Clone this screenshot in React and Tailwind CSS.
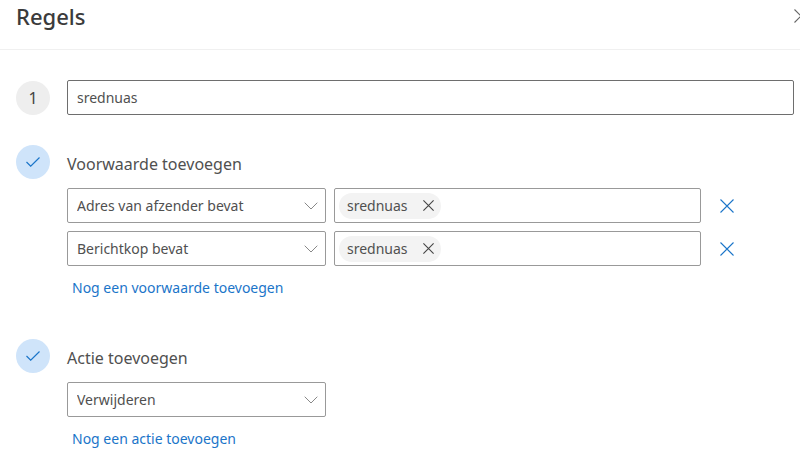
const conditions = [
  { id: "sender", type: "Adres van afzender bevat", value: "srednuas" },
  { id: "header", type: "Berichtkop bevat", value: "srednuas" },
];

function CrossIcon({ className }) {
  return (
    <svg viewBox="0 0 14 14" className={className} fill="none" stroke="currentColor" strokeWidth="1.1" aria-hidden="true">
      <path d="M.5.5l13 13M13.5.5l-13 13" vectorEffect="non-scaling-stroke" />
    </svg>
  );
}

function StepBadge({ children, done }) {
  return (
    <div
      className={`flex size-[34px] shrink-0 items-center justify-center rounded-full ${
        done ? "bg-[#cfe4fa] text-[#1b75c9]" : "bg-[#eeeeee] text-[#444444]"
      }`}
    >
      {done ? (
        <svg viewBox="0 0 14 10" className="h-[10px] w-[14px]" fill="none" stroke="currentColor" strokeWidth="1.2" aria-hidden="true">
          <path d="M.5 5l4.2 4.2L13.5.5" />
        </svg>
      ) : (
        <span className="text-base leading-6">{children}</span>
      )}
    </div>
  );
}

function Dropdown({ label, value }) {
  return (
    <div className="grid w-[259px] shrink-0 items-center">
      <select
        aria-label={label}
        defaultValue={value}
        className="col-start-1 row-start-1 h-[35px] w-full appearance-none rounded-[2px] border border-[#999999] bg-white pr-8 pl-[9px] text-sm text-[#505050]"
      >
        <option>{value}</option>
      </select>
      <svg
        viewBox="0 0 14 8"
        className="pointer-events-none col-start-1 row-start-1 mr-2 h-2 w-[14px] justify-self-end text-[#888888]"
        fill="none"
        stroke="currentColor"
        aria-hidden="true"
      >
        <path d="M.7.7L7 7 13.3.7" />
      </svg>
    </div>
  );
}

function TagField({ label, value }) {
  return (
    <div className="flex h-[35px] min-w-0 flex-1 items-center gap-2 rounded-[2px] border border-[#999999] bg-white px-1">
      <span className="flex h-[26px] shrink-0 items-center gap-[15px] rounded-full bg-[#f3f3f3] pr-[7px] pl-2 text-sm text-[#505050]">
        {value}
        <button type="button" aria-label={`${value} verwijderen`} className="text-[#444444]">
          <CrossIcon className="size-[11px]" />
        </button>
      </span>
      <input aria-label={label} className="min-w-0 flex-1 outline-none" />
    </div>
  );
}

function AddLink({ children }) {
  return (
    <button type="button" className="mt-[10px] block px-[5px] text-sm leading-6 text-[#1b75c9]">
      {children}
    </button>
  );
}

function Step({ title, className = "", children }) {
  return (
    <section className={`flex gap-[17px] ${className}`}>
      <StepBadge done />
      <div className="min-w-0 flex-1">
        <h2 className="pt-[7px] pb-3 text-base leading-6 text-[#505050]">{title}</h2>
        {children}
      </div>
    </section>
  );
}

export default function App() {
  return (
    <div className="bg-white font-['Noto_Sans',sans-serif] text-[#505050]">
      <header className="flex items-center justify-between overflow-hidden border-b border-[#f0f0f0] pt-0.5 pb-[19px] pl-4">
        <h1 className="text-[22px] leading-7 font-medium text-[#3b3b3b]">Regels</h1>
        <button type="button" aria-label="Sluiten" className="-mr-2 text-[#666666]">
          <CrossIcon className="size-[14px]" />
        </button>
      </header>

      <main className="pt-[30px] pr-[6px] pb-[11px] pl-4">
        <section className="flex items-center gap-[17px]">
          <StepBadge>1</StepBadge>
          <input
            aria-label="Naam van de regel"
            defaultValue="srednuas"
            className="h-[35px] min-w-0 flex-1 rounded-[2px] border border-[#6e6e6e] px-[9px] text-sm text-[#505050] outline-none"
          />
        </section>

        <Step title="Voorwaarde toevoegen" className="mt-[30px]">
          <div className="flex flex-col gap-2">
            {conditions.map((condition) => (
              <div key={condition.id} className="flex items-center gap-2">
                <Dropdown label="Voorwaarde" value={condition.type} />
                <TagField label="Waarde" value={condition.value} />
                <button type="button" aria-label="Voorwaarde verwijderen" className="mr-[60px] ml-[11px] text-[#1b75c9]">
                  <CrossIcon className="size-[14px]" />
                </button>
              </div>
            ))}
          </div>
          <AddLink>Nog een voorwaarde toevoegen</AddLink>
        </Step>

        <Step title="Actie toevoegen" className="mt-[39px]">
          <Dropdown label="Actie" value="Verwijderen" />
          <AddLink>Nog een actie toevoegen</AddLink>
        </Step>
      </main>
    </div>
  );
}
